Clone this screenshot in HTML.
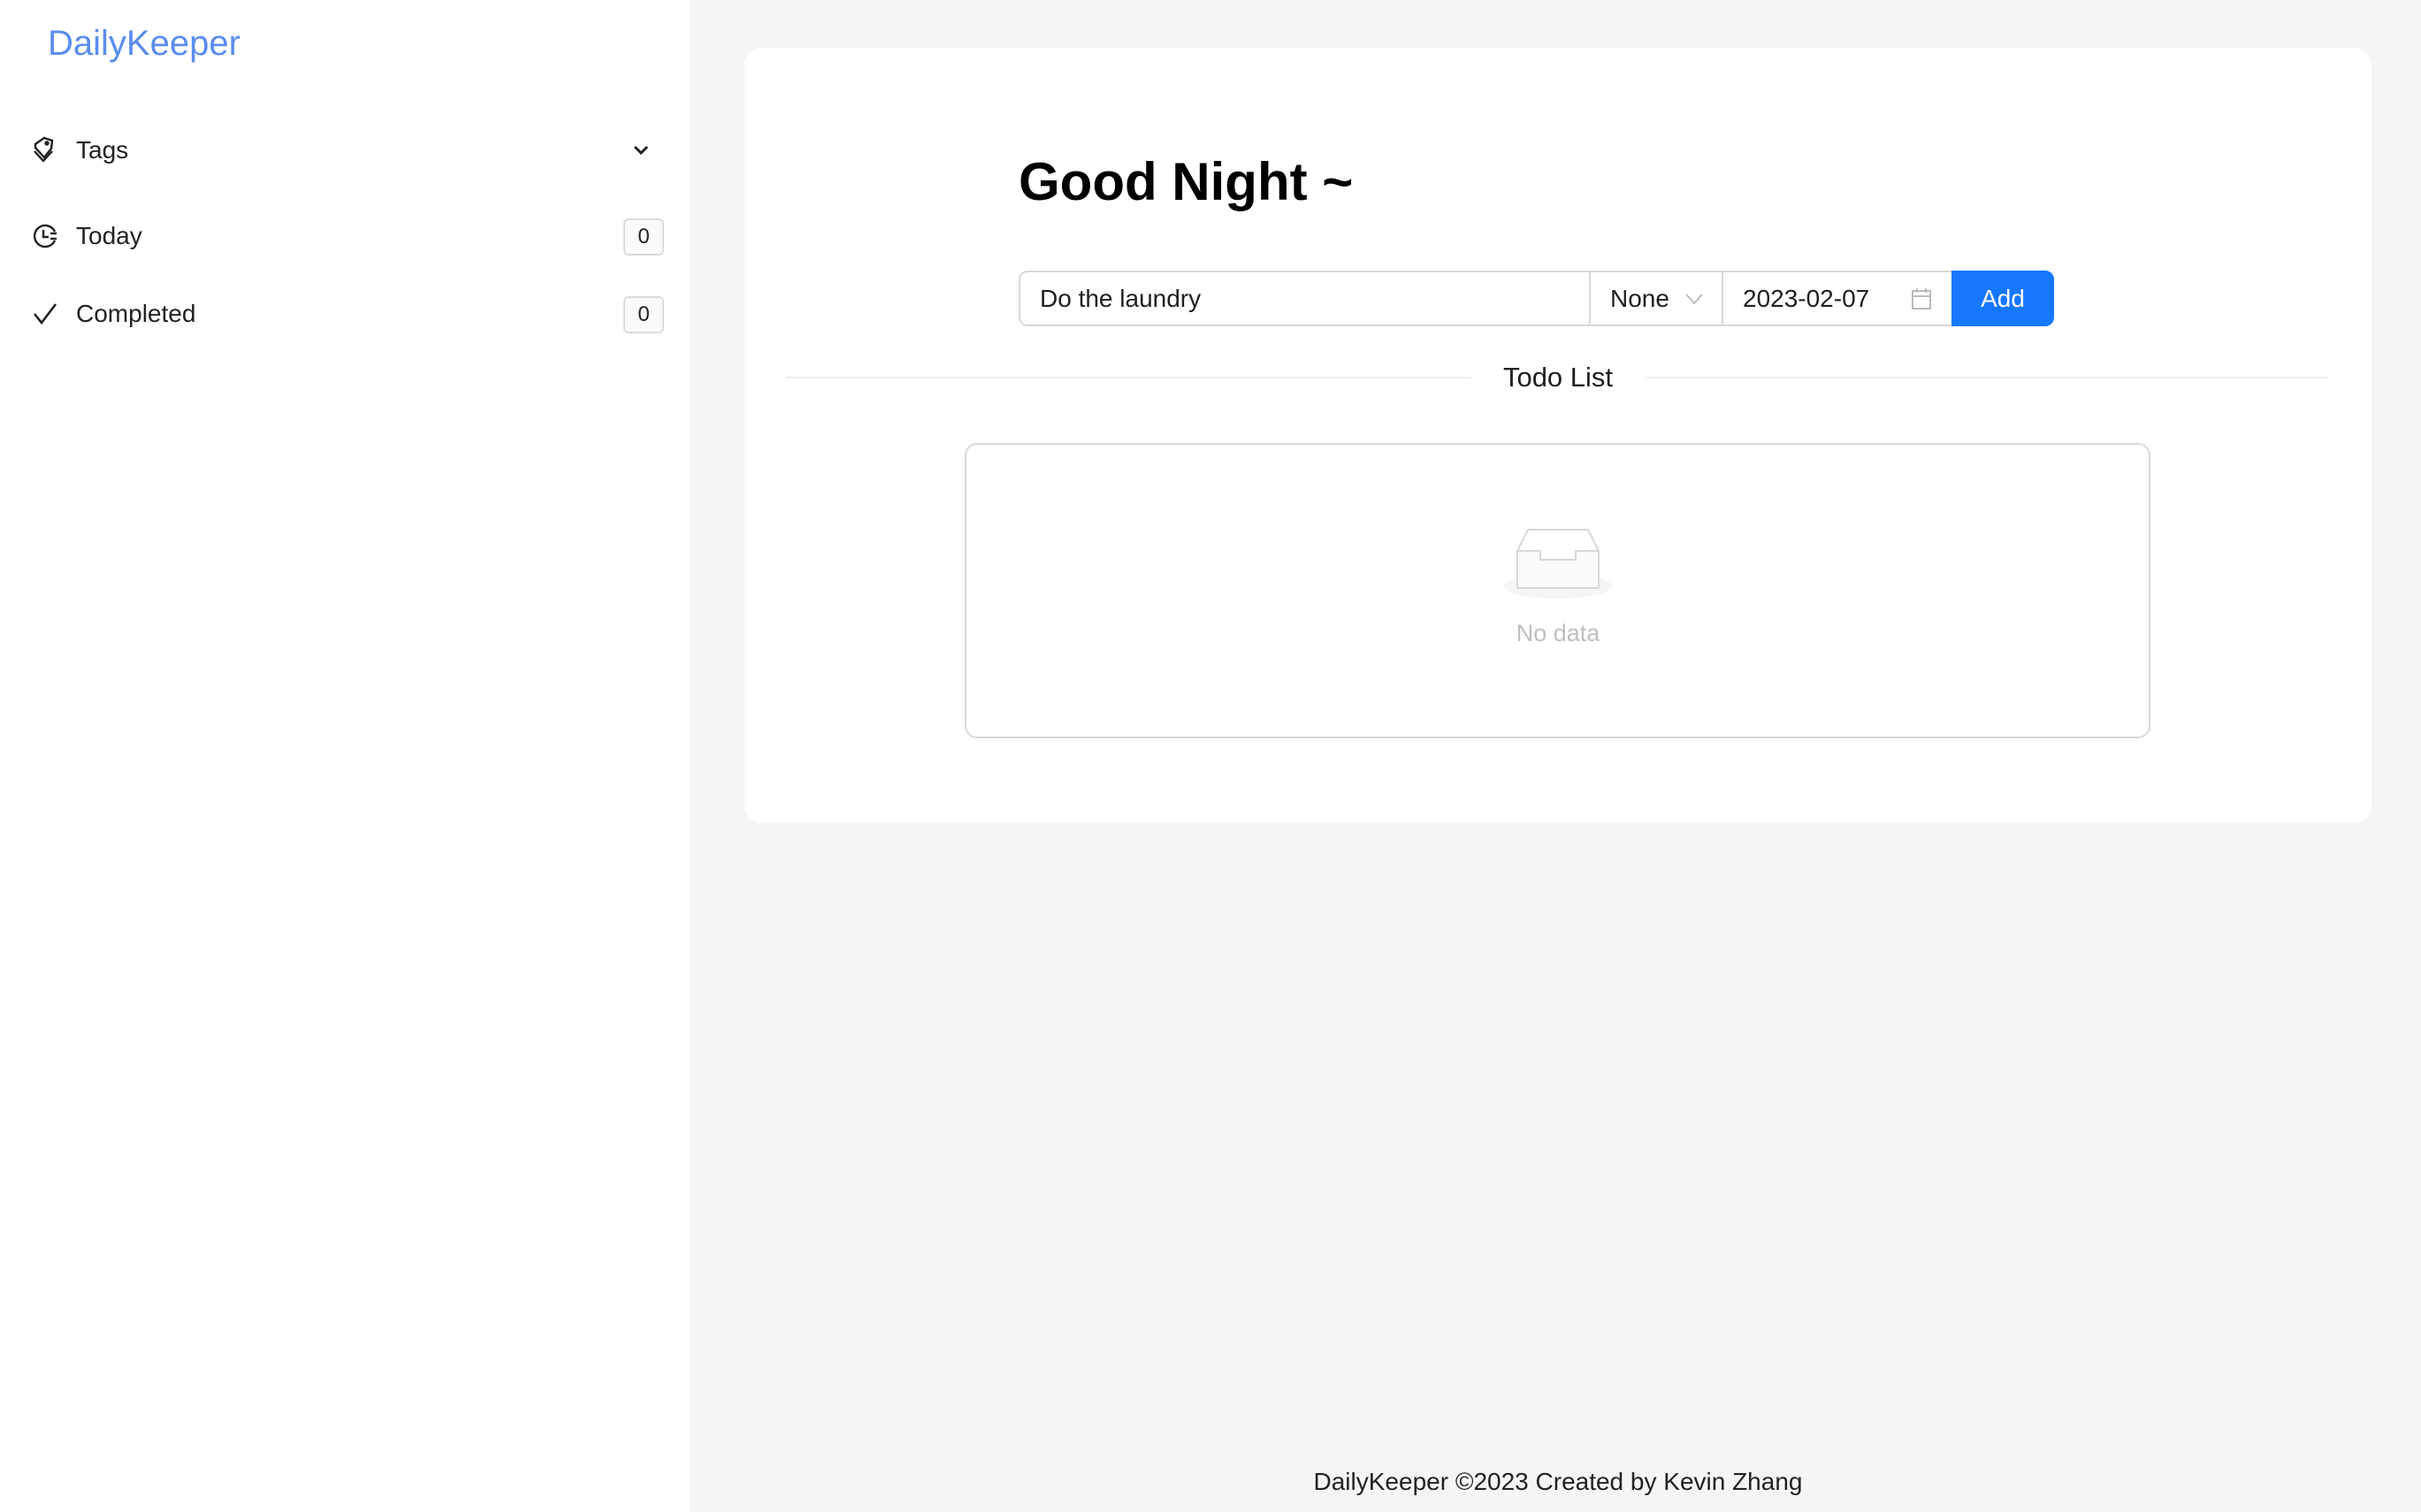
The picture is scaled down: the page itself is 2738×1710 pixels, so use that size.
<!DOCTYPE html>
<html><head><meta charset="utf-8"><style>
*{box-sizing:border-box;margin:0;padding:0}
html,body{width:2738px;height:1710px;overflow:hidden;background:#f5f5f5;font-family:"Liberation Sans",sans-serif;color:#1f1f1f}
.side{position:absolute;left:0;top:0;width:780px;height:1710px;background:#fff}
.logo{position:absolute;left:54px;top:27px;font-size:40px;color:#5b8def}
.item{position:absolute;left:0;width:780px;height:60px;display:flex;align-items:center;font-size:28px;color:#222}
.item svg{position:absolute;left:36px}
.item span{position:absolute;left:86px}
.badge{position:absolute;left:705px;width:46px;height:42px;border:2px solid #dcdcdc;border-radius:6px;background:#fafafa;font-size:24px;display:flex;align-items:center;justify-content:center}
.card{position:absolute;left:842px;top:54px;width:1840px;height:877px;background:#fff;border-radius:20px}
h1{position:absolute;left:1152px;top:171px;font-size:60px;font-weight:bold;color:#000}
.row{position:absolute;top:306px;height:63px;border:2px solid #d9d9d9;background:#fff;font-size:28px;display:flex;align-items:center}
.div{position:absolute;top:426px;height:2px;background:#eee}
.empty{position:absolute;left:1091px;top:501px;width:1341px;height:334px;border:2px solid #d9d9d9;border-radius:14px}
</style></head><body>
<div class="side">
<div class="logo">DailyKeeper</div>
<div class="item" style="top:140px"><svg width="28" height="32" viewBox="0 0 28 32" fill="none" stroke="#222" stroke-width="2.4"><path d="M4 9 L14 2 L23 5 L22 14 L14 24 L4 13Z"/><path d="M3 17 L13 28 L23 17"/><circle cx="17" cy="8" r="1.5" fill="#222"/></svg><span>Tags</span>
<svg style="left:715px" width="20" height="14" viewBox="0 0 20 14" fill="none" stroke="#222" stroke-width="3"><path d="M3 3 L10 10 L17 3"/></svg></div>
<div class="item" style="top:237px"><svg width="30" height="30" viewBox="0 0 30 30" fill="none" stroke="#222" stroke-width="2.4"><path d="M26 10 A12 12 0 1 0 26 20"/><path d="M13 8 V16 H19"/><path d="M21 12 H28 M21 18 H28"/></svg><span>Today</span><div class="badge" style="top:10px">0</div></div>
<div class="item" style="top:325px"><svg width="30" height="30" viewBox="0 0 30 30" fill="none" stroke="#222" stroke-width="2.6"><path d="M3 15 L11 25 L27 4"/></svg><span>Completed</span><div class="badge" style="top:10px">0</div></div>
</div>
<div class="card"></div>
<h1>Good Night ~</h1>
<div class="row" style="left:1152px;width:647px;border-radius:10px 0 0 10px;padding-left:22px">Do the laundry</div>
<div class="row" style="left:1797px;width:152px;padding-left:22px">None<svg style="position:absolute;right:20px" width="22" height="14" viewBox="0 0 22 14" fill="none" stroke="#bbb" stroke-width="2"><path d="M2 2 L11 12 L20 2"/></svg></div>
<div class="row" style="left:1947px;width:262px;padding-left:22px">2023-02-07<svg style="position:absolute;right:22px" width="24" height="26" viewBox="0 0 24 26" fill="none" stroke="#bbb" stroke-width="2"><rect x="2" y="4" width="20" height="20"/><path d="M2 10 H22 M7 1 V6 M17 1 V6"/></svg></div>
<div class="row" style="left:2207px;width:116px;background:#1677ff;border-color:#1677ff;color:#fff;border-radius:0 10px 10px 0;justify-content:center">Add</div>
<div class="div" style="left:889px;width:775px"></div>
<div class="div" style="left:1860px;width:773px"></div>
<div style="position:absolute;left:1662px;width:200px;top:409px;text-align:center;font-size:31px;color:#1f1f1f">Todo List</div>
<div class="empty"></div>
<svg style="position:absolute;left:1698px;top:595px" width="128" height="84" viewBox="0 0 128 84"><ellipse cx="64" cy="68" rx="62" ry="14" fill="#f5f5f5"/><path d="M18 28 L30 4 H98 L110 28" fill="none" stroke="#d9d9d9" stroke-width="2"/><path d="M18 28 H44 V38 H84 V28 H110 V70 H18Z" fill="#fafafa" stroke="#d9d9d9" stroke-width="2"/></svg>
<div style="position:absolute;left:1662px;width:200px;top:701px;text-align:center;font-size:27px;color:#bfbfbf">No data</div>
<div style="position:absolute;left:1262px;width:1000px;top:1660px;text-align:center;font-size:28px;color:#222">DailyKeeper ©2023 Created by Kevin Zhang</div>
</body></html>
